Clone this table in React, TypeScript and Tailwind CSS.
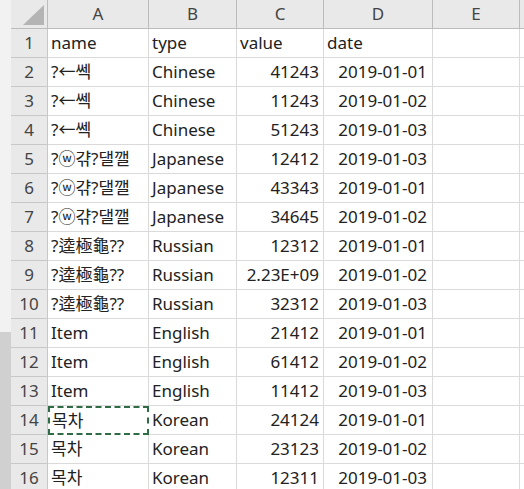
import React from "react";

type Row = { name: string; type: string; value: string; date: string };

const rows: Row[] = [
  { name: "name", type: "type", value: "value", date: "date" },
  { name: "?←쎅", type: "Chinese", value: "41243", date: "2019-01-01" },
  { name: "?←쎅", type: "Chinese", value: "11243", date: "2019-01-02" },
  { name: "?←쎅", type: "Chinese", value: "51243", date: "2019-01-03" },
  { name: "?ⓦ갺?댈깰", type: "Japanese", value: "12412", date: "2019-01-03" },
  { name: "?ⓦ갺?댈깰", type: "Japanese", value: "43343", date: "2019-01-01" },
  { name: "?ⓦ갺?댈깰", type: "Japanese", value: "34645", date: "2019-01-02" },
  { name: "?逵極龜??", type: "Russian", value: "12312", date: "2019-01-01" },
  { name: "?逵極龜??", type: "Russian", value: "2.23E+09", date: "2019-01-02" },
  { name: "?逵極龜??", type: "Russian", value: "32312", date: "2019-01-03" },
  { name: "Item", type: "English", value: "21412", date: "2019-01-01" },
  { name: "Item", type: "English", value: "61412", date: "2019-01-02" },
  { name: "Item", type: "English", value: "11412", date: "2019-01-03" },
  { name: "목차", type: "Korean", value: "24124", date: "2019-01-01" },
  { name: "목차", type: "Korean", value: "23123", date: "2019-01-02" },
  { name: "목차", type: "Korean", value: "12311", date: "2019-01-03" },
];

const cols = ["A", "B", "C", "D", "E"];

const font = {
  fontFamily: '"Noto Sans", "Noto Sans CJK KR", sans-serif',
};

export default function App() {
  return (
    <div
      className="flex h-[489px] w-[524px] overflow-hidden bg-white text-[17px] text-[#222]"
      style={font}
    >
      {/* window edge strip */}
      <div className="flex w-[11px] shrink-0 flex-col">
        <div className="h-[332px] bg-[#f2f2f2]" />
        <div className="flex-1 bg-[#d0d0d0]" />
      </div>

      <div className="grid flex-1 grid-cols-[37px_101px_88px_87px_109px_87px_1fr] auto-rows-[29px] content-start">
        {/* corner */}
        <div className="relative border-b border-r border-[#bcbcbc] bg-[#e9e9e9]">
          <svg className="absolute left-[12px] top-[5px]" width="21" height="20" viewBox="0 0 21 20">
            <polygon points="21,0 21,20 0,20" fill="#b4b4b4" />
          </svg>
        </div>
        {cols.map((c) => (
          <div
            key={c}
            className="flex items-center justify-center border-b border-r border-[#bcbcbc] bg-[#e9e9e9] text-[#444]"
          >
            {c}
          </div>
        ))}
        <div className="border-b border-[#bcbcbc] bg-[#e9e9e9]" />

        {rows.map((r, i) => {
          const selected = i === 13;
          return (
            <React.Fragment key={i}>
              <div className="flex items-center justify-center border-b border-r border-[#c8c8c8] bg-[#e9e9e9] text-[#444]">
                {i + 1}
              </div>
              <div
                className={
                  selected
                    ? "flex items-center whitespace-nowrap border-2 border-dashed border-[#2f6b45] pl-[2px]"
                    : "flex items-center whitespace-nowrap border-b border-r border-[#dadada] pl-[3px]"
                }
              >
                {r.name}
              </div>
              <div className="flex items-center whitespace-nowrap border-b border-r border-[#dadada] pl-[3px]">
                {r.type}
              </div>
              <div
                className={
                  i === 0
                    ? "flex items-center whitespace-nowrap border-b border-r border-[#dadada] pl-[3px]"
                    : "flex items-center justify-end whitespace-nowrap border-b border-r border-[#dadada] pr-[4px]"
                }
              >
                {r.value}
              </div>
              <div
                className={
                  i === 0
                    ? "flex items-center whitespace-nowrap border-b border-r border-[#dadada] pl-[3px]"
                    : "flex items-center justify-end whitespace-nowrap border-b border-r border-[#dadada] pr-[5px]"
                }
              >
                {r.date}
              </div>
              <div className="border-b border-r border-[#dadada]" />
              <div className="border-b border-[#dadada]" />
            </React.Fragment>
          );
        })}
      </div>
    </div>
  );
}
